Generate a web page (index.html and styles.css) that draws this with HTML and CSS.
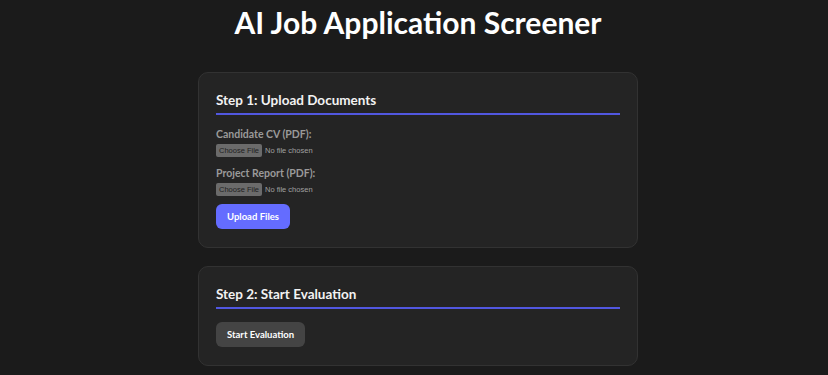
FILE: index.html
```html
<!DOCTYPE html>
<html>
<head>
  <title>AI Job Application Screener</title>
  <link rel="stylesheet" href="styles.css">
</head>
<body>

<h1>AI Job Application Screener</h1>

<div class="container">
  <div class="card">
    <h2>Step 1: Upload Documents</h2>

    <div class="field">
      <label for="cvFile">Candidate CV (PDF):</label>
      <input type="file" id="cvFile" accept="application/pdf">
    </div>

    <div class="field">
      <label for="reportFile">Project Report (PDF):</label>
      <input type="file" id="reportFile" accept="application/pdf">
    </div>

    <button class="btn btn-primary">Upload Files</button>
  </div>

  <div class="card">
    <h2>Step 2: Start Evaluation</h2>
    <button class="btn btn-secondary">Start Evaluation</button>
  </div>
</div>

</body>
</html>
```

FILE: styles.css
```css
body {
  font-family: Lato, "Noto Sans", sans-serif;
  background-color: #1b1b1b;
  color: #e6e6e6;
  margin: 0;
  padding: 0 0 0 8px;
}

h1 {
  text-align: center;
  color: #ffffff;
  font-size: 30px;
  font-weight: 700;
  line-height: 40px;
  margin: 2px 0 30px;
}

.container {
  width: 440px;
  margin: 0 auto;
}

.card {
  background-color: #242424;
  border: 1px solid #323232;
  border-radius: 10px;
  padding: 17px 17px 18px;
  margin-bottom: 18px;
}

h2 {
  font-size: 13.5px;
  font-weight: 700;
  line-height: 21px;
  color: #f2f2f2;
  margin: 0;
  padding-bottom: 2px;
  border-bottom: 2px solid #5157e0;
}

.field {
  margin-top: 12px;
}

.field + .field {
  margin-top: 9px;
}

label {
  display: block;
  font-size: 10.5px;
  font-weight: 700;
  line-height: 14px;
  color: #9a9a9a;
  margin-bottom: 3px;
}

input[type="file"] {
  display: block;
  font-family: "Liberation Sans", sans-serif;
  font-size: 7.5px;
  height: 13px;
  color: #a0a0a0;
}

input[type="file"]::file-selector-button {
  font-family: "Liberation Sans", sans-serif;
  font-size: 7.5px;
  height: 13px;
  background-color: #6b6b6b;
  color: #1f1f1f;
  border: none;
  border-radius: 2px;
  padding: 0 3px;
  margin-right: 3px;
}

.btn {
  display: block;
  font-family: Lato, sans-serif;
  font-size: 9.5px;
  font-weight: 700;
  height: 25px;
  padding: 0 11px;
  border: none;
  border-radius: 6px;
  color: #ffffff;
  cursor: pointer;
}

.btn-primary {
  background-color: #646cff;
  margin-top: 8px;
}

.btn-secondary {
  background-color: #444444;
  margin-top: 13px;
}
```
